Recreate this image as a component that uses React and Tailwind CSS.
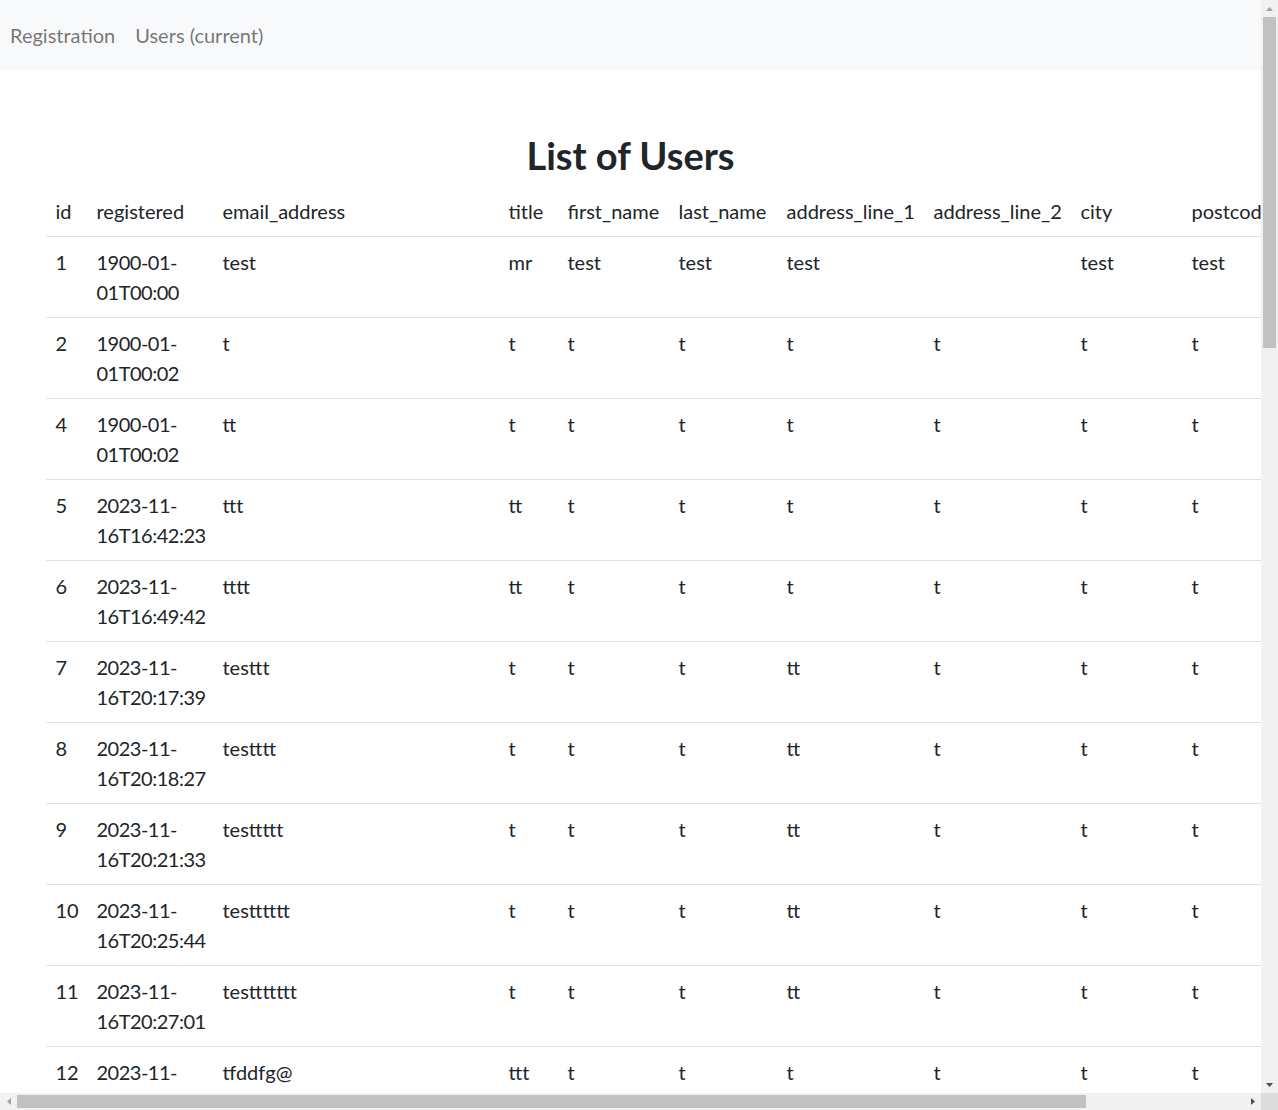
import React from "react";

const cols = [41, 126, 286, 59, 111, 108, 147, 147, 111, 266];
const headers = ["id", "registered", "email_address", "title", "first_name", "last_name", "address_line_1", "address_line_2", "city", "postcode"];

const rows = [
  ["1", ["1900-01-", "01T00:00"], "test", "mr", "test", "test", "test", "", "test", "test"],
  ["2", ["1900-01-", "01T00:02"], "t", "t", "t", "t", "t", "t", "t", "t"],
  ["4", ["1900-01-", "01T00:02"], "tt", "t", "t", "t", "t", "t", "t", "t"],
  ["5", ["2023-11-", "16T16:42:23"], "ttt", "tt", "t", "t", "t", "t", "t", "t"],
  ["6", ["2023-11-", "16T16:49:42"], "tttt", "tt", "t", "t", "t", "t", "t", "t"],
  ["7", ["2023-11-", "16T20:17:39"], "testtt", "t", "t", "t", "tt", "t", "t", "t"],
  ["8", ["2023-11-", "16T20:18:27"], "testttt", "t", "t", "t", "tt", "t", "t", "t"],
  ["9", ["2023-11-", "16T20:21:33"], "testtttt", "t", "t", "t", "tt", "t", "t", "t"],
  ["10", ["2023-11-", "16T20:25:44"], "testttttt", "t", "t", "t", "tt", "t", "t", "t"],
  ["11", ["2023-11-", "16T20:27:01"], "testtttttt", "t", "t", "t", "tt", "t", "t", "t"],
  ["12", ["2023-11-", "16T20:30:12"], "tfddfg@", "ttt", "t", "t", "t", "t", "t", "t"],
  ["13", ["2023-11-", "16T20:31:05"], "t", "t", "t", "t", "t", "t", "t", "t"],
];

function Tri({ dir, color }) {
  const pts = {
    up: "0,4 7,4 3.5,0",
    down: "0,0 7,0 3.5,4",
    left: "4,0 4,7 0,3.5",
    right: "0,0 0,7 4,3.5",
  }[dir];
  const w = dir === "up" || dir === "down" ? 7 : 4;
  const h = dir === "up" || dir === "down" ? 4 : 7;
  return (
    <svg width={w} height={h} viewBox={`0 0 ${w} ${h}`}>
      <polygon points={pts} fill={color} />
    </svg>
  );
}

export default function App() {
  return (
    <div
      className="w-[1278px] h-[1110px] flex flex-col overflow-hidden bg-white text-[#212529]"
      style={{ fontFamily: 'Lato, sans-serif' }}
    >
      <div className="flex flex-1 min-h-0">
        <div className="flex-1 min-w-0 overflow-hidden">
          <nav className="h-[70px] bg-[#f8f9fa] flex items-center">
            <a className="px-[10px] text-[20px] leading-[30px] text-black/55">Registration</a>
            <a className="px-[10px] text-[20px] leading-[30px] text-black/55">Users (current)</a>
          </nav>
          <div className="w-[1200px] mx-auto px-[15px] pt-[62px]">
            <h1 className="text-center text-[38px] leading-[46px] font-bold mb-[8px]">List of Users</h1>
            <table className="table-fixed w-[1402px] border-collapse text-[20px] leading-[30px]">
              <colgroup>
                {cols.map((w, i) => (
                  <col key={i} style={{ width: w }} />
                ))}
              </colgroup>
              <thead>
                <tr className="border-b border-[#dee2e6]">
                  {headers.map((h) => (
                    <th key={h} className="font-normal text-left px-[10px] py-[10px] whitespace-nowrap">
                      {h}
                    </th>
                  ))}
                </tr>
              </thead>
              <tbody>
                {rows.map((r) => (
                  <tr key={r[0]} className="border-b border-[#dee2e6] align-top">
                    {r.map((c, i) => (
                      <td key={i} className="px-[10px] py-[10px] whitespace-nowrap">
                        {Array.isArray(c) ? (
                          <span className="tracking-[-0.5px]">
                            {c[0]}
                            <br />
                            {c[1]}
                          </span>
                        ) : (
                          c
                        )}
                      </td>
                    ))}
                  </tr>
                ))}
              </tbody>
            </table>
          </div>
        </div>
        <div className="w-[17px] bg-[#f1f1f1] flex flex-col">
          <div className="h-[17px] flex items-center justify-center">
            <Tri dir="up" color="#a3a3a3" />
          </div>
          <div className="mx-[2px] h-[331px] bg-[#c1c1c1]" />
          <div className="flex-1" />
          <div className="h-[17px] flex items-center justify-center">
            <Tri dir="down" color="#505050" />
          </div>
        </div>
      </div>
      <div className="h-[17px] flex">
        <div className="flex-1 bg-[#f1f1f1] flex items-center">
          <div className="w-[17px] h-[17px] flex items-center justify-center">
            <Tri dir="left" color="#a3a3a3" />
          </div>
          <div className="w-[1069px] h-[13px] bg-[#c1c1c1]" />
          <div className="flex-1" />
          <div className="w-[17px] h-[17px] flex items-center justify-center">
            <Tri dir="right" color="#505050" />
          </div>
        </div>
        <div className="w-[17px] bg-[#dcdcdc]" />
      </div>
    </div>
  );
}
